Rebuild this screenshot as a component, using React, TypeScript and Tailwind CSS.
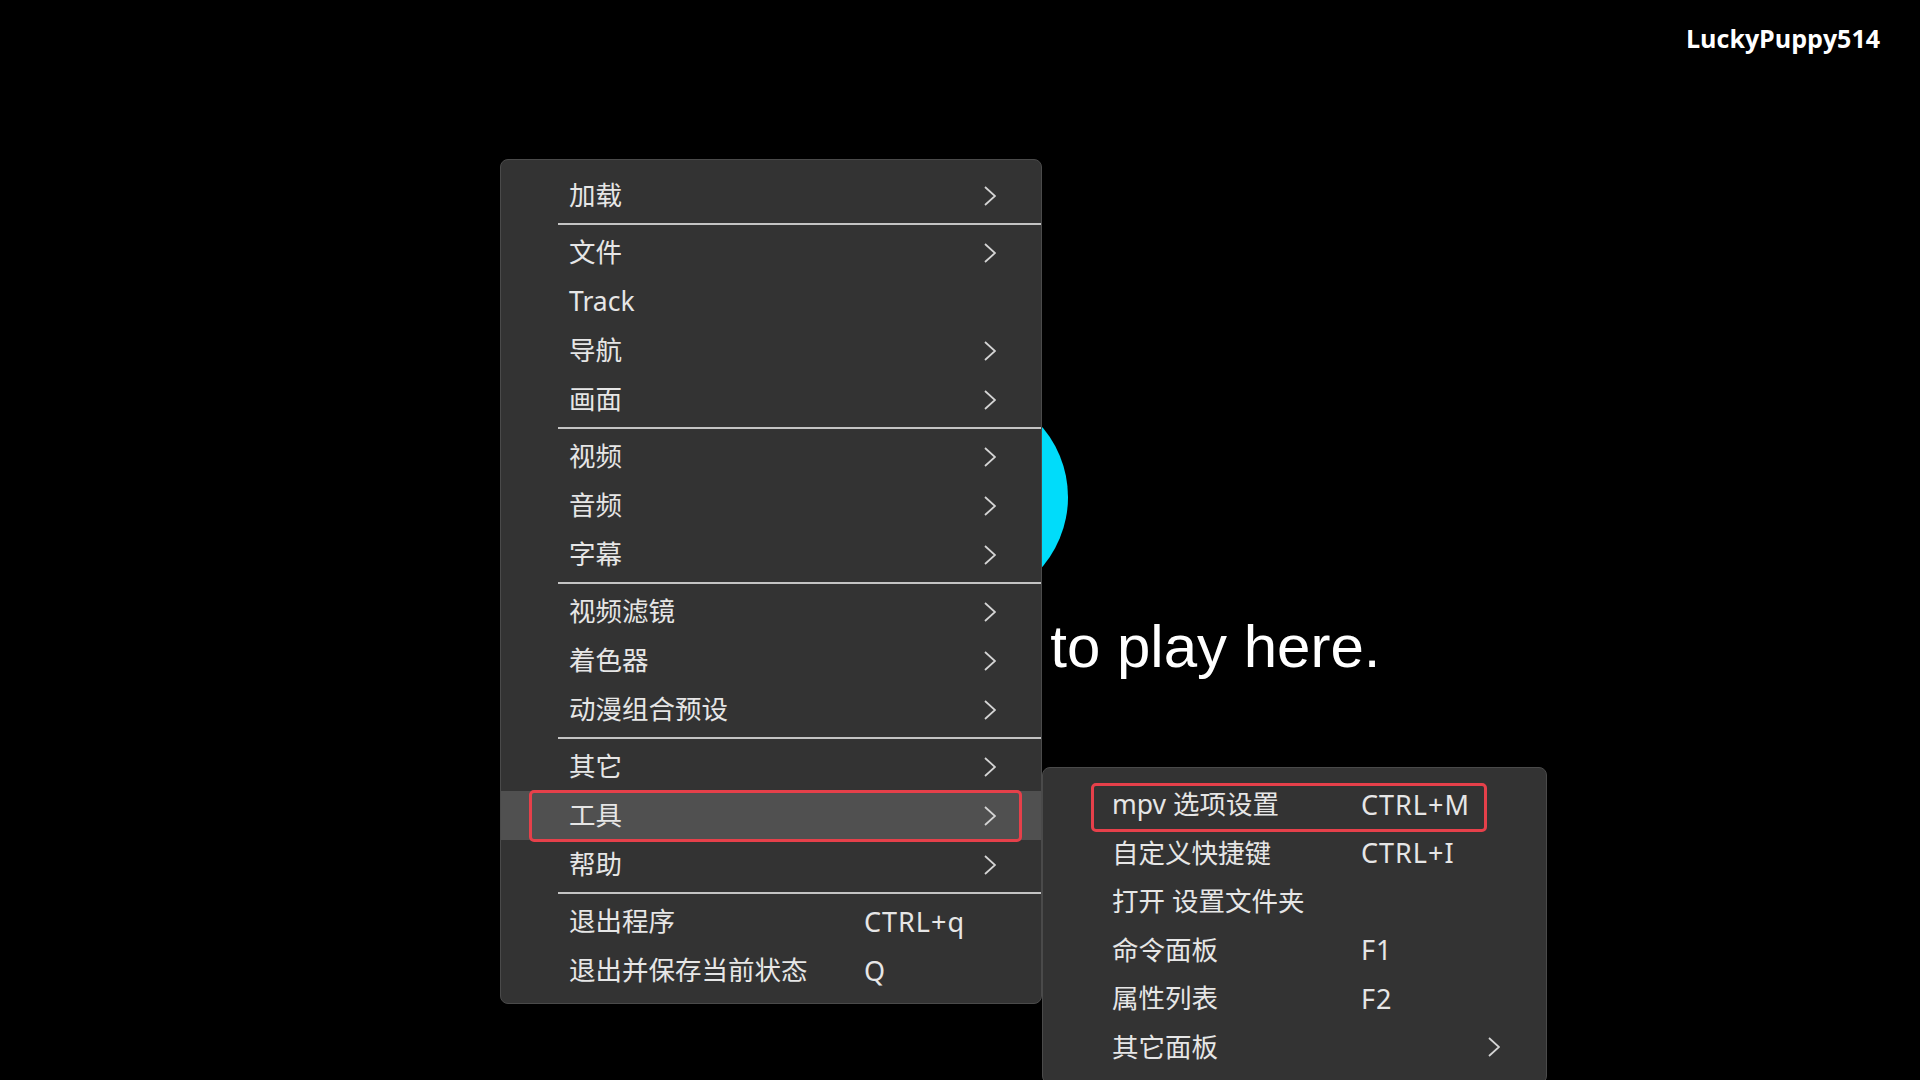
import React from "react";

type TItem =
  | { kind: "sep" }
  | { kind: "item"; label: string; shortcut?: string; sub?: boolean; active?: boolean };

const mainItems: TItem[] = [
  { kind: "item", label: "加载", sub: true },
  { kind: "sep" },
  { kind: "item", label: "文件", sub: true },
  { kind: "item", label: "Track" },
  { kind: "item", label: "导航", sub: true },
  { kind: "item", label: "画面", sub: true },
  { kind: "sep" },
  { kind: "item", label: "视频", sub: true },
  { kind: "item", label: "音频", sub: true },
  { kind: "item", label: "字幕", sub: true },
  { kind: "sep" },
  { kind: "item", label: "视频滤镜", sub: true },
  { kind: "item", label: "着色器", sub: true },
  { kind: "item", label: "动漫组合预设", sub: true },
  { kind: "sep" },
  { kind: "item", label: "其它", sub: true },
  { kind: "item", label: "工具", sub: true, active: true },
  { kind: "item", label: "帮助", sub: true },
  { kind: "sep" },
  { kind: "item", label: "退出程序", shortcut: "CTRL+q" },
  { kind: "item", label: "退出并保存当前状态", shortcut: "Q" },
];

const toolItems = [
  { label: "mpv 选项设置", shortcut: "CTRL+M", marked: true },
  { label: "自定义快捷键", shortcut: "CTRL+I" },
  { label: "打开 设置文件夹" },
  { label: "命令面板", shortcut: "F1" },
  { label: "属性列表", shortcut: "F2" },
  { label: "其它面板", sub: true },
];

const menuFont = {
  fontFamily: '"Noto Sans", "Noto Sans CJK SC", sans-serif',
};

const Chevron = () => (
  <svg width="12" height="20" viewBox="0 0 12 20" className="shrink-0">
    <path d="M1 1 L11 10 L1 19" fill="none" stroke="#d4d4d4" strokeWidth="1.8" />
  </svg>
);

const MainMenu = () => (
  <div
    className="absolute left-[500px] top-[159px] w-[542px] rounded-lg border border-[#4a4a4a] bg-[#333333] pt-[11px] pb-[8px] text-[26.5px] text-[#e6e6e6]"
    style={menuFont}
  >
    {mainItems.map((it, i) =>
      it.kind === "sep" ? (
        <div key={i} className="ml-[57px] my-[3px] h-[2px] bg-[#c4c4c4]" />
      ) : (
        <div
          key={i}
          className={`relative flex h-[49px] items-center pl-[68px] pr-[45px] ${it.active ? "bg-[#505050]" : ""}`}
        >
          <span className="w-[295px] shrink-0 whitespace-nowrap leading-none">{it.label}</span>
          <span className="flex-1 whitespace-nowrap text-[27px] leading-none tracking-[1px]">{it.shortcut}</span>
          {it.sub && <Chevron />}
          {it.active && (
            <div className="absolute left-[28px] right-[19px] -top-[1px] -bottom-[2px] rounded-[5px] border-[3px] border-[#e6404a]" />
          )}
        </div>
      )
    )}
  </div>
);

const ToolsMenu = () => (
  <div
    className="absolute left-[1042px] top-[767px] w-[505px] rounded-lg border border-[#4a4a4a] bg-[#333333] pt-[12px] pb-[12px] text-[26.5px] text-[#e6e6e6]"
    style={menuFont}
  >
    {toolItems.map((it, i) => (
      <div key={i} className="relative flex h-[48.5px] items-center pl-[69px] pr-[46px]">
        <span className="w-[249px] shrink-0 whitespace-nowrap leading-none">{it.label}</span>
        <span className="flex-1 whitespace-nowrap text-[27px] leading-none tracking-[1px]">{it.shortcut}</span>
        {it.sub && <Chevron />}
        {it.marked && (
          <div className="absolute left-[48px] right-[59px] top-[3px] -bottom-[3px] rounded-[5px] border-[3px] border-[#e6404a]" />
        )}
      </div>
    ))}
  </div>
);

const App = () => {
  return (
    <div className="relative h-screen w-full overflow-hidden bg-black">
      <div className="flex justify-end pt-[24px] pr-[40px]">
        <span
          className="text-[25px] font-bold leading-[28px] text-white"
          style={{ fontFamily: '"Open Sans", "Noto Sans", sans-serif' }}
        >
          LuckyPuppy514
        </span>
      </div>

      {/* idle screen behind the menus */}
      <div className="mx-auto mt-[337px] h-[216px] w-[216px] rounded-full bg-[#00dcfa]" />
      <div
        className="mt-[12px] pl-[4px] text-center text-[60px] leading-none text-white"
        style={{ fontFamily: '"Liberation Sans", Arial, sans-serif' }}
      >
        Drop files or URLs to play here.
      </div>

      <MainMenu />
      <ToolsMenu />
    </div>
  );
};

export default App;
